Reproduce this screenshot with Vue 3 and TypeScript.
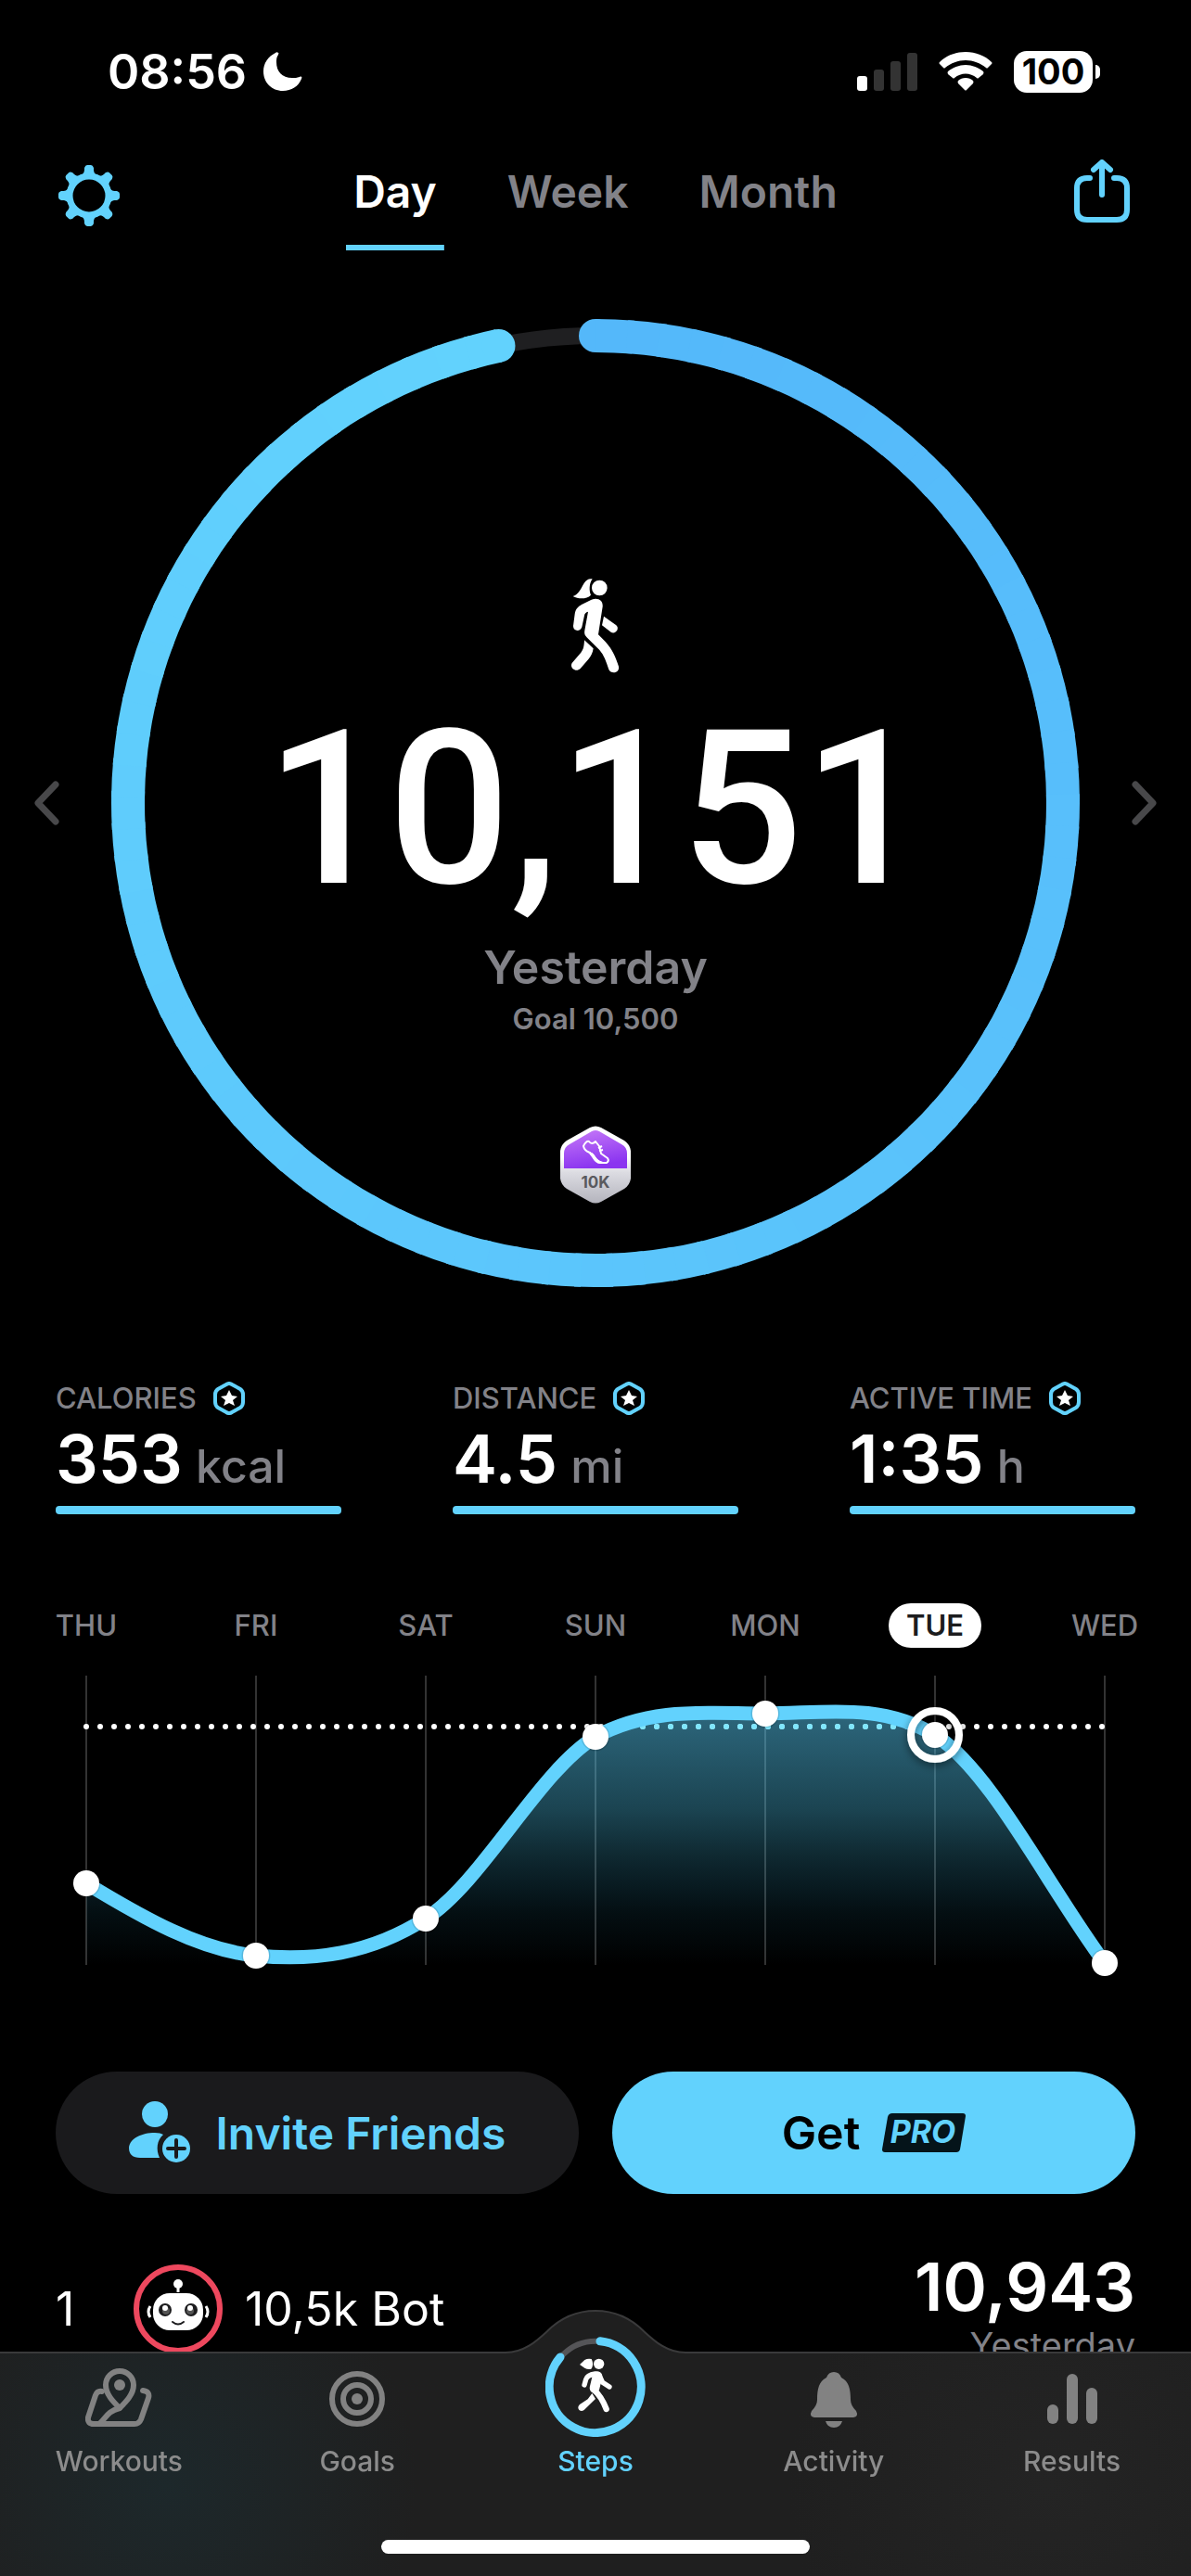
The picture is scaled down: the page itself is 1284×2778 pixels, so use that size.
<script setup lang="ts">
import { ref } from 'vue'

interface Stat { label: string; value: string; unit: string }
interface Day { name: string; x: number; y: number }

const ranges = ['Day', 'Week', 'Month']
const range = ref('Day')

const stats: Stat[] = [
  { label: 'CALORIES', value: '353', unit: 'kcal' },
  { label: 'DISTANCE', value: '4.5', unit: 'mi' },
  { label: 'ACTIVE TIME', value: '1:35', unit: 'h' },
]

const days: Day[] = [
  { name: 'THU', x: 93, y: 254 },
  { name: 'FRI', x: 276, y: 332 },
  { name: 'SAT', x: 459, y: 292 },
  { name: 'SUN', x: 642, y: 96 },
  { name: 'MON', x: 825, y: 71 },
  { name: 'TUE', x: 1008, y: 94 },
  { name: 'WED', x: 1191, y: 340 },
]
const selected = ref('TUE')

const curve =
  'M93 254 C154 291 215 326 276 332 C337 338 398 331 459 292 C520 253 581 133 642 96 ' +
  'C703 63 764 71 825 71 C886 71 947 58 1008 94 C1069 133 1130 258 1191 340'
const area = curve + ' V342 H93 Z'

const teeth = [0, 45, 90, 135, 180, 225, 270, 315]

/* The progress ring is drawn in short arcs so its colour can change along the way. */
const steps = 10151
const goal = 10500
const pieces = 90
const sweep = (steps / goal) * 2 * Math.PI
const from = [84, 184, 250]
const to = [98, 210, 253]

function at(angle: number): string {
  return `${(522 + 504 * Math.sin(angle)).toFixed(2)} ${(522 - 504 * Math.cos(angle)).toFixed(2)}`
}
function tint(t: number): string {
  return `rgb(${from.map((c, i) => Math.round(c + (to[i] - c) * t)).join(',')})`
}
const arcs = Array.from({ length: pieces }, (_, i) => {
  const start = (sweep * i) / pieces
  const end = Math.min(sweep, (sweep * (i + 1.2)) / pieces)
  return { d: `M${at(start)} A504 504 0 0 1 ${at(end)}`, color: tint(i / (pieces - 1)) }
})
const ringEnd = { x: 522 + 504 * Math.sin(sweep), y: 522 - 504 * Math.cos(sweep) }
</script>

<template>
  <div class="screen">
    <div class="status">
      <div class="clock">
        <span>08:56</span>
        <svg width="42" height="42" viewBox="0 0 42 42" aria-hidden="true">
          <path d="M16 1 C15 0 14 0 13 1 C5 5 0 12 0 21 C0 33 9 42 21 42 C30 42 38 37 41 29 C42 27 41 26 39 27 C36 28 34 28 31 28 C20 28 14 21 14 11 C14 8 14 6 16 3 C16 2 17 1 16 1Z" fill="#fff" />
        </svg>
      </div>
      <div class="signals">
        <svg width="65" height="42" viewBox="0 0 65 42" aria-hidden="true">
          <rect x="0" y="26" width="11" height="16" rx="3" fill="#fff" />
          <rect x="18" y="19" width="11" height="23" rx="3" fill="#333" />
          <rect x="36" y="10" width="11" height="32" rx="3" fill="#333" />
          <rect x="54" y="1" width="11" height="41" rx="3" fill="#333" />
        </svg>
        <svg width="58" height="42" viewBox="0 0 58 42" aria-hidden="true">
          <path d="M29 0 C40 0 50 4 57 11 Q58 12 57 13 L53 17 Q52 18 51 17 C45 12 37 9 29 9 C21 9 13 12 7 17 Q6 18 5 17 L1 13 Q0 12 1 11 C8 4 18 0 29 0Z" fill="#fff" />
          <path d="M29 14 C36 14 43 17 48 21 Q49 22 48 24 L43 28 Q42 29 41 28 C34 22 24 22 17 28 Q16 29 15 28 L10 24 Q9 22 10 21 C15 17 22 14 29 14Z" fill="#fff" />
          <path d="M29 28 C32 28 35 29 37 31 Q38 32 37 34 L30 41 Q29 42 28 41 L21 34 Q20 32 21 31 C23 29 26 28 29 28Z" fill="#fff" />
        </svg>
        <div class="battery"><span>100</span></div>
      </div>
    </div>

    <header class="header">
      <button class="icon" aria-label="Settings">
        <svg width="72" height="72" viewBox="0 0 72 72">
          <g transform="translate(36 39)" fill="#62d2fd">
            <circle r="21" fill="none" stroke="#62d2fd" stroke-width="7" />
            <path v-for="a in teeth" :key="a" :transform="`rotate(${a})`" d="M-10 -21 C-5 -24 -5 -26 -5 -30 Q-4 -33 -2 -33 H2 Q4 -33 5 -30 C5 -26 5 -24 10 -21Z" />
          </g>
        </svg>
      </button>
      <nav class="ranges">
        <button v-for="r in ranges" :key="r" :class="{ on: r === range }" @click="range = r">{{ r }}</button>
      </nav>
      <button class="icon" aria-label="Share">
        <svg width="72" height="72" viewBox="0 0 72 72" fill="none" stroke="#62d2fd" stroke-width="6" stroke-linecap="round" stroke-linejoin="round">
          <path d="M23 20 H20 Q9 20 9 31 V54 Q9 65 20 65 H52 Q63 65 63 54 V31 Q63 20 52 20 H49" />
          <path d="M36 38 V5 M27 11 L36 3 L45 11" />
        </svg>
      </button>
    </header>

    <main>
      <section class="progress">
        <button class="step" aria-label="Previous day">
          <svg width="28" height="48" viewBox="0 0 28 48"><path d="M24 4 L5 24 L24 44" /></svg>
        </button>
        <div class="dial">
          <svg class="ring" viewBox="0 0 1044 1044" aria-hidden="true">
            <circle cx="522" cy="522" r="504" fill="none" stroke="#1f1f21" stroke-width="18" />
            <circle cx="522" cy="18" r="18" :fill="tint(0)" />
            <path v-for="(arc, i) in arcs" :key="i" :d="arc.d" fill="none" :stroke="arc.color" stroke-width="36" />
            <circle :cx="ringEnd.x" :cy="ringEnd.y" r="18" :fill="tint(1)" />
          </svg>
          <div class="inside">
            <svg class="walker" width="54" height="104" viewBox="72 68 162 312" fill="#fff" aria-hidden="true">
              <path d="M143 72 C120 68 114 92 102 110 C95 120 88 126 80 128 C98 138 125 138 138 124 C132 110 132 88 143 72Z" />
              <circle cx="166" cy="101" r="25" />
              <path d="M140 139 C162 131 178 142 176 162 L162 252 L185 275 C208 300 218 325 228 355 C232 376 204 382 196 365 C188 340 180 318 166 302 L126 262 C116 252 117 246 118 238 L129 178 C122 180 118 183 117 190 L109 228 C104 244 80 242 81 224 L86 186 C88 170 96 162 108 155Z" />
              <path d="M180 193 L220 222 C232 232 218 252 204 245 L174 222Z" />
              <path d="M117 270 L146 297 C144 312 138 322 130 332 L104 362 C90 376 68 360 77 344 L106 310 C114 300 116 290 117 270Z" />
            </svg>
            <h1>10,151</h1>
            <p class="when">Yesterday</p>
            <p class="goal">Goal 10,500</p>
            <svg class="medal" width="78" height="84" viewBox="0 0 78 84">
              <defs>
                <linearGradient id="silver" x1="0" y1="0" x2="0" y2="1">
                  <stop offset="0.4" stop-color="#fff" /><stop offset="0.6" stop-color="#dcdce2" /><stop offset="1" stop-color="#b4b4bd" />
                </linearGradient>
                <linearGradient id="violet" x1="0" y1="0" x2="0.3" y2="1">
                  <stop offset="0" stop-color="#c77af8" /><stop offset="1" stop-color="#8b35f0" />
                </linearGradient>
              </defs>
              <path d="M33 2 Q39 -1 45 2 L70 16 Q76 20 77 27 V57 Q76 64 70 68 L45 82 Q39 85 33 82 L8 68 Q2 64 1 57 V27 Q2 20 8 16Z" fill="url(#silver)" />
              <path d="M35 6 Q39 4 43 6 L67 20 Q73 23 73 30 V46 H5 V30 Q5 23 11 20Z" fill="url(#violet)" />
              <path d="M26 22 Q29 16 32 17 Q35 21 39 17 L43 22 L45 30 L52 35 Q54 38 51 40 H44 Q40 40 37 35 L33 29 Q27 27 26 22Z" fill="none" stroke="#fff" stroke-width="2" stroke-linejoin="round" />
              <path d="M31 28 Q37 29 39 34 Q42 39 50 40 H44 Q40 40 37 35Z" fill="#fff" stroke="#fff" />
              <path d="M42 24 L46 22 M43 27 L47 26" stroke="#fff" stroke-width="2" />
              <text x="39" y="67" text-anchor="middle" class="medal-text">10K</text>
            </svg>
          </div>
        </div>
        <button class="step" aria-label="Next day">
          <svg width="28" height="48" viewBox="0 0 28 48"><path d="M4 4 L23 24 L4 44" /></svg>
        </button>
      </section>

      <section class="stats">
        <div v-for="s in stats" :key="s.label" class="stat">
          <div class="stat-label">
            <span>{{ s.label }}</span>
            <svg width="34" height="36" viewBox="0 0 34 36" aria-hidden="true">
              <path d="M14 3 Q17 1 20 3 L29 8 Q32 10 32 14 V22 Q32 26 29 28 L20 33 Q17 35 14 33 L5 28 Q2 26 2 22 V14 Q2 10 5 8Z" fill="none" stroke="#62d2fd" stroke-width="4" />
              <path d="M17 9 L20 15 L26 16 L21 20 L23 26 L17 23 L11 26 L13 20 L8 16 L14 15Z" fill="#fff" />
            </svg>
          </div>
          <div class="stat-value">{{ s.value }} <small>{{ s.unit }}</small></div>
          <div class="bar"></div>
        </div>
      </section>

      <section class="week">
        <div class="days">
          <button v-for="d in days" :key="d.name" :class="{ on: d.name === selected }" @click="selected = d.name">{{ d.name }}</button>
        </div>
        <svg class="chart" viewBox="0 0 1284 360" role="img" aria-label="Steps this week">
          <defs>
            <linearGradient id="fade" gradientUnits="userSpaceOnUse" x1="0" y1="71" x2="0" y2="342">
              <stop offset="0" stop-color="#5acdf8" stop-opacity="0.5" />
              <stop offset="0.38" stop-color="#50c8f0" stop-opacity="0.34" />
              <stop offset="0.57" stop-color="#46c0e6" stop-opacity="0.21" />
              <stop offset="0.8" stop-color="#30b0dc" stop-opacity="0.08" />
              <stop offset="1" stop-color="#30b0dc" stop-opacity="0" />
            </linearGradient>
            <clipPath id="under"><path :d="area" /></clipPath>
            <filter id="soft" x="-50%" y="-50%" width="200%" height="200%">
              <feDropShadow dx="0" dy="3" stdDeviation="5" flood-color="#000" flood-opacity="0.5" />
            </filter>
          </defs>
          <path v-for="d in days" :key="d.name" :d="`M${d.x} 30 V342`" stroke="#333" stroke-width="2" />
          <path d="M93 85 H1192" class="dots" stroke="#fff" />
          <path :d="area" fill="url(#fade)" />
          <path d="M93 85 H1192" class="dots" stroke="#7fe6fc" clip-path="url(#under)" />
          <path :d="curve" fill="none" stroke="#62d2fd" stroke-width="15" />
          <g v-for="d in days" :key="d.name">
            <circle v-if="d.name === selected" :cx="d.x" :cy="d.y" r="26" fill="none" stroke="#fff" stroke-width="8" filter="url(#soft)" />
            <circle :cx="d.x" :cy="d.y" r="14" fill="#fff" stroke="#000" stroke-opacity="0.12" stroke-width="3" paint-order="stroke" />
          </g>
        </svg>
      </section>

      <section class="actions">
        <button class="invite">
          <svg width="68" height="68" viewBox="0 0 68 68" aria-hidden="true">
            <circle cx="28" cy="14" r="14" fill="#62d2fd" />
            <path d="M28 34 Q34 34 37 36 C30 42 29 52 33 61 H12 Q0 61 0 50 C1 40 14 34 28 34Z" fill="#62d2fd" />
            <circle cx="51" cy="51" r="15" fill="#62d2fd" />
            <path d="M51 42 V60 M42 51 H60" stroke="#1a1a1c" stroke-width="4" stroke-linecap="round" />
          </svg>
          <span>Invite Friends</span>
        </button>
        <button class="get">
          <span>Get</span>
          <svg width="90" height="42" viewBox="0 0 90 42">
            <path d="M11 0 H87 Q90 0 90 3 L84 39 Q83 42 80 42 H3 Q0 42 0 39 L6 4 Q7 0 11 0Z" fill="#05141a" />
            <text x="44" y="32" text-anchor="middle" class="pro">PRO</text>
          </svg>
        </button>
      </section>

      <section class="entry">
        <span class="rank">1</span>
        <svg width="96" height="96" viewBox="0 0 96 96" aria-hidden="true">
          <circle cx="48" cy="48" r="45" fill="#000" stroke="#ee485e" stroke-width="6" />
          <circle cx="48" cy="21" r="5" fill="#fff" />
          <path d="M48 24 V30" stroke="#fff" stroke-width="3" />
          <rect x="21" y="31" width="54" height="40" rx="18" fill="#fff" />
          <path d="M18 45 Q14 51 18 57 M78 45 Q82 51 78 57" stroke="#fff" stroke-width="3" fill="none" />
          <circle cx="34" cy="49" r="7" fill="#1c1c1e" /><circle cx="62" cy="49" r="7" fill="#1c1c1e" />
          <circle cx="35" cy="50" r="4" fill="#555" /><circle cx="61" cy="50" r="4" fill="#555" />
          <circle cx="34" cy="47" r="3" fill="#fff" /><circle cx="61" cy="47" r="3" fill="#fff" />
          <path d="M42 62 Q48 67 54 62" stroke="#1c1c1e" stroke-width="2" fill="none" stroke-linecap="round" />
        </svg>
        <span class="name">10,5k Bot</span>
        <div class="score">
          <strong>10,943</strong>
          <span>Yesterday</span>
        </div>
      </section>
    </main>

    <nav class="tabs">
      <svg class="shape" viewBox="0 0 1284 288" preserveAspectRatio="none" aria-hidden="true">
        <defs>
          <radialGradient id="teal" gradientUnits="userSpaceOnUse" cx="180" cy="190" r="270">
            <stop offset="0" stop-color="#1d282b" /><stop offset="1" stop-color="#1f1f1f" />
          </radialGradient>
          <radialGradient id="glow" gradientUnits="userSpaceOnUse" cx="1130" cy="190" r="280">
            <stop offset="0" stop-color="#242424" /><stop offset="1" stop-color="#242424" stop-opacity="0" />
          </radialGradient>
        </defs>
        <path d="M0 47 H545 C565 47 578 35 590 24 C604 10 620 2 642 2 C664 2 680 10 694 24 C706 35 719 47 739 47 H1284 V288 H0Z" fill="url(#teal)" />
        <path d="M739 47 H1284 V288 H739Z" fill="url(#glow)" />
        <path d="M0 47 H545 C565 47 578 35 590 24 C604 10 620 2 642 2 C664 2 680 10 694 24 C706 35 719 47 739 47 H1284" fill="none" stroke="#3a3a3b" stroke-width="2" />
      </svg>
      <div class="items">
        <a href="#workouts">
          <svg width="72" height="64" viewBox="0 0 72 64" fill="none" stroke="#828282" stroke-width="6" stroke-linecap="round" stroke-linejoin="round">
            <path d="M18 25 Q13 24 11 29 L3 53 Q2 60 9 60 H53 Q58 60 60 55 L68 32 Q70 25 62 24" />
            <path d="M37 43 C30 36 22 28 22 18 A15 15 0 0 1 52 18 C52 28 44 36 37 43Z" />
            <path d="M37 43 C24 46 22 54 16 59" />
            <circle cx="37" cy="18" r="6" fill="#828282" stroke="none" />
          </svg>
          <span>Workouts</span>
        </a>
        <a href="#goals">
          <svg width="64" height="64" viewBox="0 0 64 64" fill="none" stroke="#828282" stroke-width="6">
            <circle cx="32" cy="33" r="27" /><circle cx="32" cy="33" r="15" /><circle cx="32" cy="33" r="6" fill="#828282" stroke="none" />
          </svg>
          <span>Goals</span>
        </a>
        <a href="#steps" class="on">
          <svg width="108" height="108" viewBox="81 120 324 324" fill="none" stroke-linecap="round" stroke-linejoin="round">
            <circle cx="243" cy="282" r="148" stroke="#555558" stroke-width="18" />
            <path d="M258 134.500 A148.500 148.500 0 1 1 129 186" stroke="#62d2fd" stroke-width="27" />
            <g fill="#fff">
              <path d="M192 210 L208 195 Q218 189 230 192 C236 204 235 217 229 224 Q218 227 208 221Z" />
              <circle cx="254" cy="208" r="17" />
              <path d="M232 303 L243 321 L206 357 C192 366 180 350 192 339 L218 322Z" />
            </g>
            <g stroke="#fff">
              <path d="M242 240 Q216 244 212 258 L207 276" stroke-width="16" />
              <path d="M256 246 L266 268 L288 282" stroke-width="16" />
              <path d="M249 248 L240 286" stroke-width="32" />
              <path d="M238 292 Q262 312 278 354" stroke-width="19" />
            </g>
          </svg>
          <span>Steps</span>
        </a>
        <a href="#activity">
          <svg width="54" height="64" viewBox="0 0 54 64" fill="#828282">
            <path d="M27 4 Q33 4 35 10 C43 14 45 22 45 34 Q45 40 51 46 Q54 52 48 53 H6 Q0 52 3 46 Q9 40 9 34 C9 22 11 14 19 10 Q21 4 27 4Z" />
            <path d="M18 57 H36 Q34 64 27 64 Q20 64 18 57Z" />
          </svg>
          <span>Activity</span>
        </a>
        <a href="#results">
          <svg width="54" height="64" viewBox="0 0 54 64" fill="#828282">
            <rect x="0" y="39" width="12" height="21" rx="6" /><rect x="21" y="6" width="12" height="54" rx="6" /><rect x="42" y="21" width="12" height="39" rx="6" />
          </svg>
          <span>Results</span>
        </a>
      </div>
      <div class="home"></div>
    </nav>
  </div>
</template>

<style>
body {
  background: #000;
}
</style>

<style scoped>
.screen {
  height: 100vh;
  overflow: hidden;
  background: #000;
  color: #fff;
  font-family: Inter, Roboto, sans-serif;
  font-size: 50px;
  font-weight: 600;
}
.screen * {
  box-sizing: border-box;
}
.screen svg {
  display: block;
  flex: none;
}
button {
  padding: 0;
  border: 0;
  background: none;
  color: inherit;
  font: inherit;
}
h1,
p {
  margin: 0;
}
.status {
  display: flex;
  align-items: center;
  justify-content: space-between;
  height: 154px;
  padding: 0 98px 0 116px;
}
.clock {
  display: flex;
  align-items: center;
  gap: 18px;
  font-size: 52px;
}
.signals {
  display: flex;
  align-items: center;
  gap: 23px;
}
.battery {
  display: flex;
  align-items: center;
  gap: 3px;
}
.battery span {
  width: 85px;
  border-radius: 14px;
  background: #fff;
  color: #000;
  font-size: 38px;
  font-weight: 700;
  line-height: 45px;
  text-align: center;
}
.battery::after {
  width: 5px;
  height: 15px;
  border-radius: 0 8px 8px 0;
  background: #fff;
  content: '';
}
.header {
  display: flex;
  justify-content: space-between;
  align-items: flex-start;
  padding: 18px 60px 0;
}
.ranges {
  display: flex;
  gap: 60px;
}
.ranges button {
  padding: 5px 8px 27px;
  border-bottom: 6px solid transparent;
  color: #828288;
  font-size: 48px;
  line-height: 60px;
}
.ranges .on {
  color: #fff;
  background: linear-gradient(#62d2fd, #62d2fd) bottom / 100% 6px no-repeat border-box;
}
.progress {
  display: grid;
  grid-template-columns: 100px 1fr 100px;
  align-items: center;
  margin-top: 74px;
}
.step {
  display: flex;
  justify-content: center;
}
.step path {
  fill: none;
  stroke: #48484a;
  stroke-width: 7;
  stroke-linecap: round;
  stroke-linejoin: round;
}
.dial {
  display: grid;
  width: 100%;
  max-width: 1044px;
  margin: 0 auto;
}
.ring,
.inside {
  grid-area: 1 / 1;
}
.inside {
  display: flex;
  flex-direction: column;
  align-items: center;
  padding-top: 279px;
}
h1 {
  margin-top: 34px;
  font-family: Roboto, "Noto Sans", sans-serif;
  font-size: 232px;
  font-weight: 500;
  line-height: 224px;
}
.when {
  margin-top: 28px;
  color: #828288;
  line-height: 60px;
}
.goal {
  margin-top: 8px;
  color: #828288;
  font-size: 31px;
  line-height: 36px;
}
.medal {
  margin-top: 97px;
}
.medal-text {
  fill: #5a5a5e;
  font-size: 17px;
  font-weight: 700;
}
.stats {
  display: grid;
  grid-template-columns: repeat(3, 1fr);
  gap: 120px;
  margin-top: 102px;
  padding: 0 60px;
}
.stat-label {
  display: flex;
  align-items: center;
  gap: 18px;
  color: #828288;
  font-size: 31px;
  font-weight: 500;
  line-height: 36px;
  white-space: nowrap;
}
.stat-value {
  height: 70px;
  margin-top: 12px;
  font-size: 72px;
  line-height: 70px;
  white-space: nowrap;
}
.stat-value small {
  margin-left: -4px;
  color: #828288;
  font-size: 50px;
  font-weight: 500;
  line-height: 50px;
}
.bar {
  height: 9px;
  margin-top: 16px;
  border-radius: 4px;
  background: #62d2fd;
}
.days {
  display: flex;
  justify-content: space-between;
  margin-top: 96px;
  padding: 0 43px;
}
.days button {
  width: 100px;
  border-radius: 24px;
  color: #828288;
  font-size: 31px;
  font-weight: 500;
  line-height: 48px;
}
.days .on {
  background: #fff;
  color: #1c1c1e;
  font-weight: 600;
}
.screen .chart {
  width: 100%;
}
.dots {
  fill: none;
  stroke-width: 6;
  stroke-linecap: round;
  stroke-dasharray: 0 15;
}
.actions {
  display: grid;
  grid-template-columns: 1fr 1fr;
  gap: 36px;
  margin-top: 97px;
  padding: 0 60px;
}
.actions button {
  display: flex;
  align-items: center;
  justify-content: center;
  height: 132px;
  border-radius: 66px;
}
.actions .invite {
  gap: 26px;
  background: #1a1a1c;
  color: #62d2fd;
  font-size: 48px;
}
.actions .get {
  gap: 24px;
  background: #62d2fd;
  color: #000;
}
.pro {
  fill: #62d2fd;
  font-size: 34px;
  font-style: italic;
  font-weight: 700;
}
.entry {
  display: flex;
  align-items: center;
  margin-top: 62px;
  padding: 0 60px;
  font-weight: 400;
}
.rank {
  width: 84px;
}
.name {
  flex: 1;
  margin-left: 24px;
}
.score {
  display: flex;
  flex-direction: column;
  align-items: flex-end;
  gap: 2px;
}
.score strong {
  font-size: 72px;
  font-weight: 600;
  line-height: 76px;
}
.score span {
  color: #828288;
  font-size: 38px;
  line-height: 46px;
}
.tabs {
  position: fixed;
  right: 0;
  bottom: 0;
  left: 0;
}
.screen .shape {
  position: absolute;
  width: 100%;
  height: 100%;
}
.items {
  position: relative;
  display: grid;
  grid-template-columns: repeat(5, 1fr);
  align-items: end;
  padding-top: 30px;
}
.items a {
  display: flex;
  flex-direction: column;
  align-items: center;
  gap: 18px;
  color: #8c8c8c;
  font-size: 30px;
  font-weight: 500;
  line-height: 36px;
  text-decoration: none;
}
.items .on {
  gap: 8px;
  color: #62d2fd;
}
.home {
  position: relative;
  width: 36%;
  height: 15px;
  margin: 67px auto 24px;
  border-radius: 8px;
  background: #fff;
}
</style>
